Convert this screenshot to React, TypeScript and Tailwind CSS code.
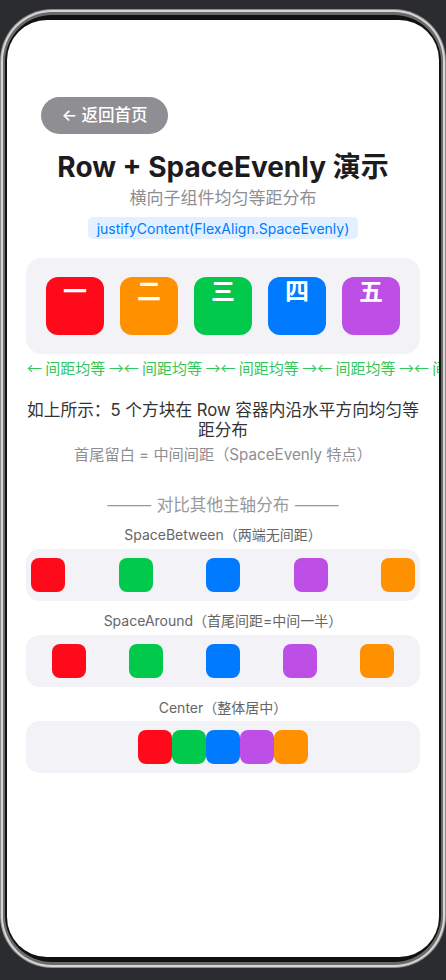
import React from 'react';

const FONT = { fontFamily: 'Inter, "Noto Sans CJK SC", sans-serif' };
const CJK = { fontFamily: '"Noto Sans CJK SC", sans-serif' };

type Block = { label: string; color: string };

const BIG_BLOCKS: Block[] = [
  { label: '一', color: 'bg-[#ff0a1a]' },
  { label: '二', color: 'bg-[#ff9100]' },
  { label: '三', color: 'bg-[#00c94b]' },
  { label: '四', color: 'bg-[#007aff]' },
  { label: '五', color: 'bg-[#bd4fe6]' },
];

// the comparison rows use a different order: red, green, blue, purple, orange
const SMALL_COLORS = ['bg-[#ff0a1a]', 'bg-[#00c94b]', 'bg-[#007aff]', 'bg-[#bd4fe6]', 'bg-[#ff9100]'];

function SmallRow({ justify }: { justify: string }) {
  return (
    <div className={`flex h-[52px] w-full items-center rounded-[14px] bg-[#f2f2f7] px-[5px] ${justify}`}>
      {SMALL_COLORS.map((c, i) => (
        <div key={i} className={`h-[34px] w-[34px] rounded-[8px] ${c}`} />
      ))}
    </div>
  );
}

function PhoneFrame({ children }: { children: React.ReactNode }) {
  return (
    <div className="min-h-[980px] w-[446px] overflow-hidden bg-[#2a2c30] pt-[9px]">
      <div className="h-[959px] w-[446px] rounded-[52px] bg-[#8c8c8c] p-[1px]">
        <div className="h-full w-full rounded-[51px] bg-[#d6d6d6] p-[2px]">
          <div className="h-full w-full rounded-[49px] bg-[#6a6a6a] px-[2px] py-[3px]">
            <div className="h-full w-full rounded-[47px] bg-[#111] px-[2px] py-[5px]">
              <div className="h-full w-full overflow-hidden rounded-[40px] bg-white">{children}</div>
            </div>
          </div>
        </div>
      </div>
    </div>
  );
}

export default function App() {
  return (
    <PhoneFrame>
      <div className="flex flex-col items-center px-[19px] pt-[77px]" style={FONT}>
        <button
          type="button"
          className="ml-[15px] flex h-[37px] w-[127px] items-center justify-center self-start rounded-full bg-[#8e8e93] text-[16.5px] font-medium text-white"
        >
          ← 返回首页
        </button>

        <h1 className="mt-[13px] h-[40px] text-[28px] font-bold leading-[40px] text-[#1c1c1e]">
          Row + SpaceEvenly 演示
        </h1>
        <p className="h-[22px] text-[17px] leading-[22px] text-[#8e8e93]">横向子组件均匀等距分布</p>
        <div className="mt-[8px] flex h-[22px] items-center rounded-[5px] bg-[#e3f0ff] px-[9px] text-[14px] text-[#007aff]">
          justifyContent(FlexAlign.SpaceEvenly)
        </div>

        {/* main demo: space-evenly */}
        <div className="mt-[19px] flex h-[96px] w-full items-center justify-evenly rounded-[16px] bg-[#f2f2f7] px-1">
          {BIG_BLOCKS.map((b) => (
            <div
              key={b.label}
              className={`flex h-[58px] w-[58px] justify-center rounded-[12px] text-[24px] font-bold leading-[30px] text-white ${b.color}`}
            >
              {b.label}
            </div>
          ))}
        </div>

        <div
          className="mt-[4px] flex h-[20px] self-start whitespace-nowrap pl-[1px] text-[15px] leading-[20px] text-[#34c759]"
          style={CJK}
        >
          {[0, 1, 2, 3, 4].map((i) => (
            <span key={i}>← 间距均等 →</span>
          ))}
        </div>

        <p className="mt-[22px] text-center text-[16.7px] leading-[20px] text-[#333]">
          如上所示：5 个方块在 Row 容器内沿水平方向均匀等距分布
        </p>
        <p className="mt-[5px] h-[20px] text-[15.2px] leading-[20px] text-[#8e8e93]">
          首尾留白 = 中间间距（SpaceEvenly 特点）
        </p>

        <p className="mt-[27px] h-[22px] text-[16.6px] leading-[22px] text-[#999]">
          <span className="text-[18.5px]" style={CJK}>
            ———
          </span>{' '}
          对比其他主轴分布{' '}
          <span className="text-[18.5px]" style={CJK}>
            ———
          </span>
        </p>

        <p className="mt-[11px] h-[20px] text-[14px] leading-[20px] text-[#666]">SpaceBetween（两端无间距）</p>
        <div className="mt-[4px] w-full">
          <SmallRow justify="justify-between" />
        </div>

        <p className="mt-[10px] h-[20px] text-[14px] leading-[20px] text-[#666]">SpaceAround（首尾间距=中间一半）</p>
        <div className="mt-[4px] w-full">
          <SmallRow justify="justify-around" />
        </div>

        <p className="mt-[11px] h-[20px] text-[14px] leading-[20px] text-[#666]">Center（整体居中）</p>
        <div className="mt-[3px] w-full">
          <SmallRow justify="justify-center" />
        </div>
      </div>
    </PhoneFrame>
  );
}
